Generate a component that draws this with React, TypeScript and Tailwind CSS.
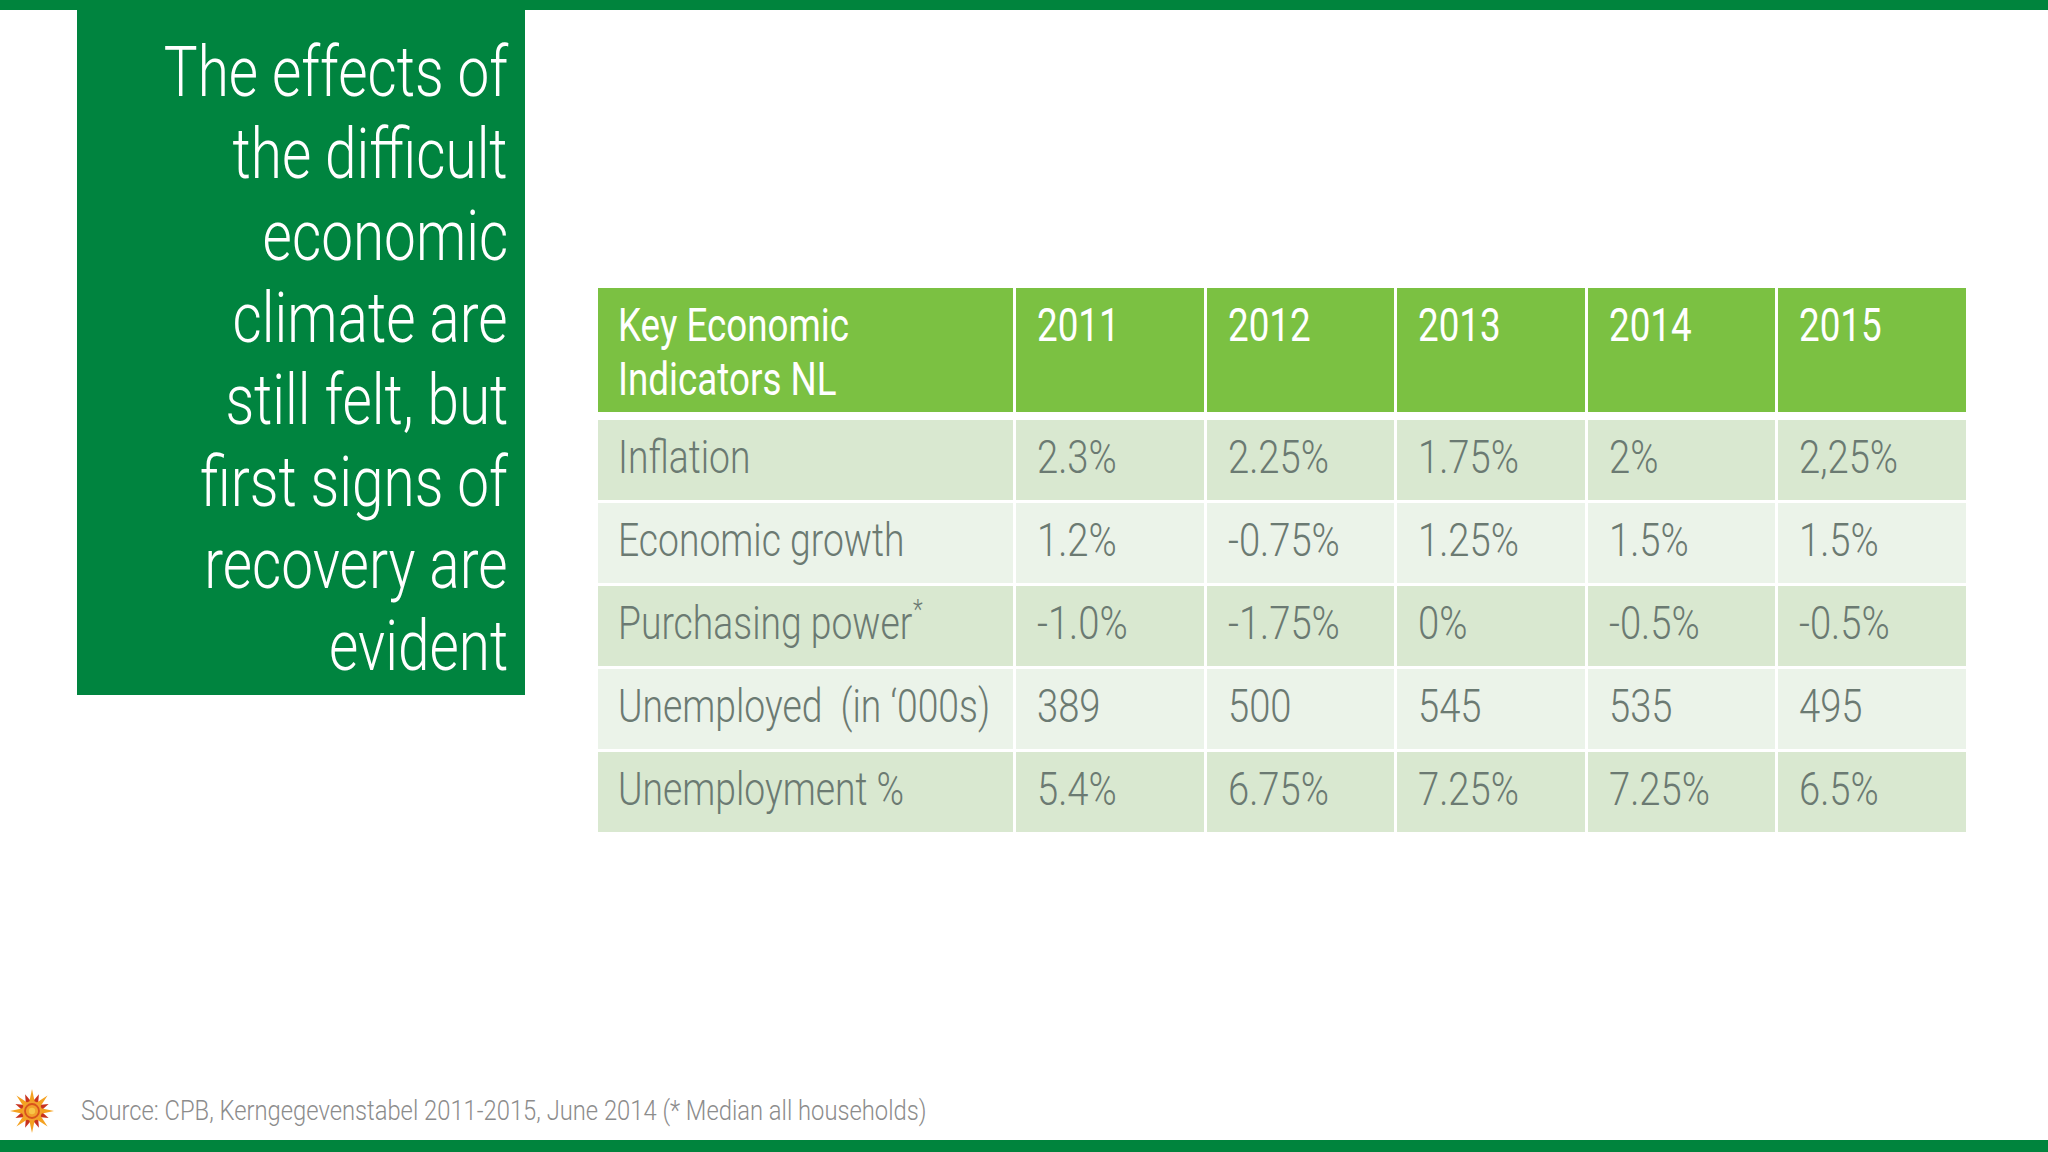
import React from "react";

const rows: { label: string; star?: boolean; values: string[] }[] = [
  { label: "Inflation", values: ["2.3%", "2.25%", "1.75%", "2%", "2,25%"] },
  { label: "Economic growth", values: ["1.2%", "-0.75%", "1.25%", "1.5%", "1.5%"] },
  { label: "Purchasing power", star: true, values: ["-1.0%", "-1.75%", "0%", "-0.5%", "-0.5%"] },
  { label: "Unemployed  (in ‘000s)", values: ["389", "500", "545", "535", "495"] },
  { label: "Unemployment %", values: ["5.4%", "6.75%", "7.25%", "7.25%", "6.5%"] },
];

const years = ["2011", "2012", "2013", "2014", "2015"];

const titleLines = [
  "The effects of",
  "the difficult",
  "economic",
  "climate are",
  "still felt, but",
  "first signs of",
  "recovery are",
  "evident",
];

// star points for the little sun logo
function spikes(count: number, outer: number, inner: number, offset: number) {
  const pts: string[] = [];
  for (let i = 0; i < count; i++) {
    const a = ((i * 360) / count + offset) * (Math.PI / 180);
    const w = (Math.PI / count) * 0.9;
    pts.push(
      `${22 + inner * Math.cos(a - w)},${22 + inner * Math.sin(a - w)} ${22 + outer * Math.cos(a)},${22 + outer * Math.sin(a)} ${22 + inner * Math.cos(a + w)},${22 + inner * Math.sin(a + w)}`
    );
  }
  return pts;
}

function SunLogo() {
  return (
    <svg width="44" height="44" viewBox="0 0 44 44">
      {spikes(8, 18, 9, 22.5).map((p, i) => (
        <polygon key={"r" + i} points={p} fill="#c8321f" />
      ))}
      {spikes(8, 22, 8.5, -90).map((p, i) => (
        <polygon key={"o" + i} points={p} fill="#f4a11f" />
      ))}
      <circle cx="22" cy="22" r="10" fill="#f2a12c" />
      <circle cx="22" cy="22" r="7" fill="none" stroke="#d9531c" strokeWidth="1.8" />
      <circle cx="22" cy="22" r="3.2" fill="#f8c548" />
    </svg>
  );
}

export default function App() {
  return (
    <div className="w-[2048px] h-[1152px] bg-white flex flex-col overflow-hidden font-['Roboto','DejaVu_Sans_Condensed',sans-serif]">
      {/* top bar */}
      <div className="h-[10px] bg-[#00843d]" />

      <div className="flex-1 flex items-start">
        {/* green title box */}
        <div className="ml-[77px] w-[448px] h-[685px] bg-[#00843f] pt-[21px] pr-[17px] text-right text-white text-[70px] leading-[82px] font-light">
          {titleLines.map((l) => (
            <div key={l} className="whitespace-nowrap">
              <span className="inline-block origin-right scale-x-[0.81]">{l}</span>
            </div>
          ))}
        </div>

        {/* indicators table */}
        <div className="ml-[73px] mt-[278px] w-[1368px] flex flex-col">
          <div className="grid grid-cols-[415px_repeat(5,1fr)] gap-x-[3px] h-[124px] text-white text-[46px] leading-[54px]">
            <div className="bg-[#7bc142] pl-[20px] pt-[10px]">
              <div className="origin-top-left scale-x-[0.8] whitespace-nowrap">
                Key Economic
                <br />
                Indicators NL
              </div>
            </div>
            {years.map((y) => (
              <div key={y} className="bg-[#7bc142] pl-[21px] pt-[10px]">
                <span className="inline-block origin-left scale-x-[0.8]">{y}</span>
              </div>
            ))}
          </div>

          <div className="mt-[8px] flex flex-col gap-y-[3px]">
            {rows.map((r, i) => {
              const bg = i % 2 === 0 ? "bg-[#d9e8d0]" : "bg-[#ebf3e9]";
              return (
                <div key={r.label} className="grid grid-cols-[415px_repeat(5,1fr)] gap-x-[3px] h-[80px] text-[#6b7a72] text-[46px] leading-[46px] font-light">
                  <div className={`${bg} pl-[20px] pb-[6px] flex items-center whitespace-pre`}>
                    <span className="inline-block origin-left scale-x-[0.81]">
                      {r.label}
                      {r.star && <sup className="text-[28px] -top-[20px] ml-[1px]">*</sup>}
                    </span>
                  </div>
                  {r.values.map((v, j) => (
                    <div key={j} className={`${bg} pl-[21px] pb-[6px] flex items-center`}>
                      <span className="inline-block origin-left scale-x-[0.83]">{v}</span>
                    </div>
                  ))}
                </div>
              );
            })}
          </div>
        </div>
      </div>

      {/* source footer */}
      <div className="h-[58px] flex items-center pl-[10px]">
        <SunLogo />
        <span className="ml-[27px] inline-block origin-left scale-x-[0.88] text-[27px] text-[#8c8c8c] font-light whitespace-nowrap">
          Source: CPB, Kerngegevenstabel 2011-2015, June 2014 (* Median all households)
        </span>
      </div>

      {/* bottom bar */}
      <div className="h-[12px] bg-[#00843d]" />
    </div>
  );
}
